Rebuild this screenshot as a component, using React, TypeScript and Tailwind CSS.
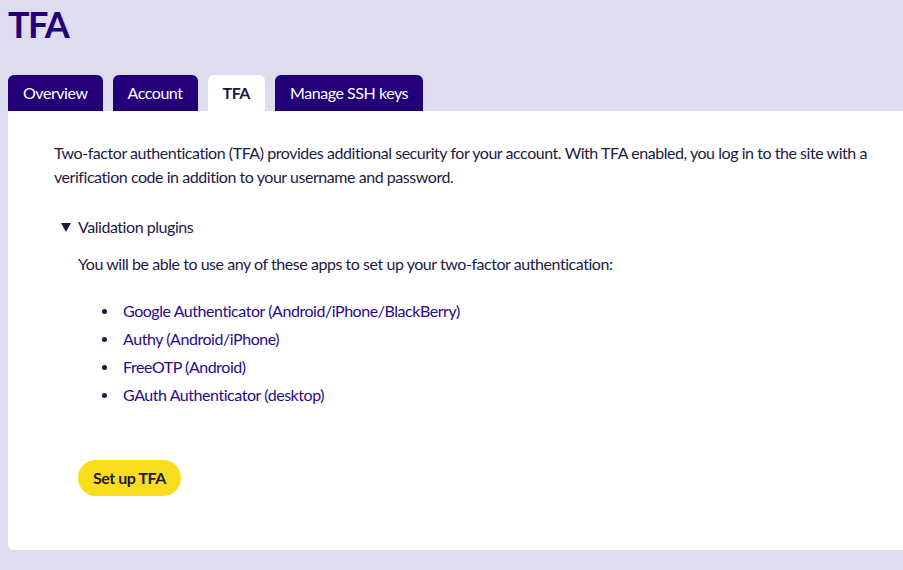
import React from 'react';

const tabs = ['Overview', 'Account', 'TFA', 'Manage SSH keys'];

const apps = [
  'Google Authenticator (Android/iPhone/BlackBerry)',
  'Authy (Android/iPhone)',
  'FreeOTP (Android)',
  'GAuth Authenticator (desktop)',
];

const App: React.FC = () => {
  const active = 'TFA';

  return (
    <div className="min-h-[570px] overflow-hidden bg-[#dedcef] pl-2 font-['Lato',sans-serif] tracking-[-0.45px] text-[#1d1a42]">
      {/* Header */}
      <h1 className="pt-[2px] text-[36px] font-bold leading-[44px] tracking-[-1.5px] text-[#23007a]">TFA</h1>

      {/* Tabs */}
      <div className="mt-[29px] flex gap-[10px]">
        {tabs.map(tab => (
          <div
            key={tab}
            className={
              tab === active
                ? 'flex h-9 items-center rounded-t-md bg-white px-[15px] text-[16px] font-bold text-[#1d1a42]'
                : 'flex h-9 items-center rounded-t-md bg-[#23007a] px-[15px] text-[16px] text-white'
            }
          >
            {tab}
          </div>
        ))}
      </div>

      {/* Panel */}
      <div className="rounded-bl-md bg-white pb-[54px] pl-[46px] pr-4 pt-[30px] text-[16px] leading-6">
        <p>
          Two-factor authentication (TFA) provides additional security for your account. With TFA enabled, you log in to
          the site with a verification code in addition to your username and password.
        </p>

        <div className="mt-[26px]">
          <div className="flex items-center">
            <svg width="10" height="9" viewBox="0 0 10 9" className="ml-[7px] mr-[7px]">
              <path d="M0 0H10L5 9Z" fill="currentColor" />
            </svg>
            <span>Validation plugins</span>
          </div>

          <div className="pl-[24px]">
            <p className="mt-[13px]">You will be able to use any of these apps to set up your two-factor authentication:</p>

            <ul className="mt-[21px]">
              {apps.map(app => (
                <li key={app} className="flex h-7 items-center">
                  <span className="ml-[24px] mr-[16px] h-[5px] w-[5px] rounded-full bg-[#1d1a42]" />
                  <span className="text-[#2a0a86]">{app}</span>
                </li>
              ))}
            </ul>

            <button className="mt-[51px] h-9 rounded-full bg-[#f8dc1e] px-[15px] font-bold text-[#1d1a42]">
              Set up TFA
            </button>
          </div>
        </div>
      </div>
    </div>
  );
};

export default App;
